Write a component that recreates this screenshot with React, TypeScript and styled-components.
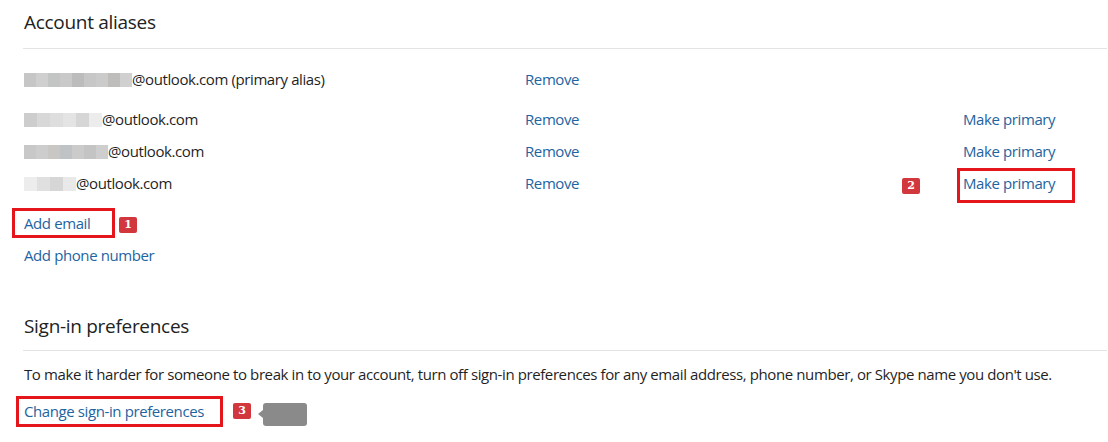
import styled, { createGlobalStyle } from "styled-components";

const GlobalStyle = createGlobalStyle`
  body {
    margin: 0;
    background: #ffffff;
    font-family: "Open Sans", "Noto Sans", sans-serif;
    color: #1f1f1f;
  }
`;

const Page = styled.div`
  padding: 8px 1px 0 23px;
`;

const Section = styled.section`
  display: flex;
  flex-direction: column;
`;

const Heading = styled.h2<{ $top?: number }>`
  margin: ${p => p.$top ?? 0}px 0 0 1px;
  font-size: 19px;
  letter-spacing: -0.3px;
  font-weight: 400;
  line-height: 28px;
  color: #222;
`;

const Rule = styled.hr<{ $top?: number }>`
  margin: ${p => p.$top ?? 12}px 0 0;
  border: 0;
  border-top: 1px solid #e3e3e3;
`;

const AliasList = styled.div`
  display: grid;
  grid-template-columns: 501px 438px 1fr;
  padding-left: 1px;
  margin-top: 14px;
`;

const Cell = styled.div<{ $gapAfter?: number }>`
  font-size: 15px;
  letter-spacing: -0.4px;
  line-height: 32px;
  white-space: nowrap;
  margin-bottom: ${p => p.$gapAfter ?? 0}px;
`;

const Link = styled.a`
  color: #1e64a0;
  text-decoration: none;
  font-size: 15px;
  letter-spacing: -0.4px;
  line-height: 32px;
  cursor: pointer;
  white-space: nowrap;
`;

const Redacted = styled.span`
  display: inline-flex;
  vertical-align: -2px;
  height: 14px;
`;

const Pixel = styled.span<{ $w: number; $c: string }>`
  width: ${p => p.$w}px;
  height: 100%;
  background: ${p => p.$c};
`;

const LinkStack = styled.div`
  display: flex;
  flex-direction: column;
  align-items: flex-start;
  padding-left: 1px;
  margin-top: 8px;
`;

const Highlight = styled.span`
  position: relative;
  display: inline-block;
`;

const Box = styled.span<{ $l: number; $t: number; $w: number; $h: number }>`
  position: absolute;
  left: ${p => p.$l}px;
  top: ${p => p.$t}px;
  width: ${p => p.$w}px;
  height: ${p => p.$h}px;
  border: 3px solid #e4161b;
  box-sizing: border-box;
  pointer-events: none;
`;

const Badge = styled.span<{ $l: number; $t: number }>`
  position: absolute;
  left: ${p => p.$l}px;
  top: ${p => p.$t}px;
  width: 18px;
  height: 16px;
  border-radius: 2px;
  background: #d1373d;
  color: #fff;
  font-family: "DejaVu Serif", "Liberation Serif", serif;
  font-weight: 700;
  font-size: 11px;
  letter-spacing: 0;
  line-height: 16px;
  text-align: center;
`;

const Callout = styled.span<{ $l: number; $t: number }>`
  position: absolute;
  left: ${p => p.$l}px;
  top: ${p => p.$t}px;
  width: 44px;
  height: 23px;
  border-radius: 3px;
  background: #8a8a8a;
  &::before {
    content: "";
    position: absolute;
    left: -5px;
    top: 7px;
    border-style: solid;
    border-width: 4.5px 5px 4.5px 0;
    border-color: transparent #8a8a8a transparent transparent;
  }
`;

const Paragraph = styled.p`
  margin: 10px 0 0 1px;
  font-size: 15px;
  letter-spacing: -0.4px;
  line-height: 26px;
  white-space: nowrap;
`;

const blur = (colors: string[], w: number) => (
  <Redacted>
    {colors.map((c, i) => (
      <Pixel key={i} $w={w} $c={c} />
    ))}
  </Redacted>
);

type Alias = {
  cells: string[];
  cellW: number;
  label: string;
  primary?: boolean;
};

const aliases: Alias[] = [
  {
    cells: ["#c6c6c6", "#cfcfcf", "#c3c4c4", "#c9c9c9", "#bcbcbc", "#c7c7c7", "#cbcbcb", "#bebdbb", "#d0d0d0"],
    cellW: 12,
    label: "@outlook.com (primary alias)",
    primary: true,
  },
  {
    cells: ["#cdcdcd", "#d8d8d8", "#dedede", "#e4e4e4", "#d6d6d6", "#ececec"],
    cellW: 13,
    label: "@outlook.com",
  },
  {
    cells: ["#c8c8c8", "#cdcdcd", "#c9c7c4", "#bfc3c6", "#cbcbcb", "#c4c4c4", "#cecece"],
    cellW: 12,
    label: "@outlook.com",
  },
  {
    cells: ["#ededed", "#e0e0e0", "#d6d6d6", "#e9e9e9"],
    cellW: 13,
    label: "@outlook.com",
  },
];

export default function App() {
  return (
    <Page>
      <GlobalStyle />
      <Section>
        <Heading>Account aliases</Heading>
        <Rule />
        <AliasList>
          {aliases.map((a, i) => {
            const gap = i === 0 ? 8 : 0;
            const last = i === aliases.length - 1;
            return [
              <Cell key={`n${i}`} $gapAfter={gap}>
                {blur(a.cells, a.cellW)}
                {a.label}
              </Cell>,
              <Cell key={`r${i}`} $gapAfter={gap}>
                <Link>Remove</Link>
              </Cell>,
              <Cell key={`p${i}`} $gapAfter={gap}>
                {a.primary ? null : last ? (
                  <Highlight>
                    <Link>Make primary</Link>
                    <Box $l={-6} $t={1} $w={118} $h={35} />
                    <Badge $l={-61} $t={11}>2</Badge>
                  </Highlight>
                ) : (
                  <Link>Make primary</Link>
                )}
              </Cell>,
            ];
          })}
        </AliasList>
        <LinkStack>
          <Highlight>
            <Link>Add email</Link>
            <Box $l={-12} $t={1} $w={103} $h={30} />
            <Badge $l={95} $t={10}>1</Badge>
          </Highlight>
          <Link>Add phone number</Link>
        </LinkStack>
      </Section>
      <Section>
        <Heading $top={41}>Sign-in preferences</Heading>
        <Rule $top={10} />
        <Paragraph>
          To make it harder for someone to break in to your account, turn off sign-in preferences for any email address, phone number, or Skype name you don't use.
        </Paragraph>
        <LinkStack>
          <Highlight>
            <Link>Change sign-in preferences</Link>
            <Box $l={-8} $t={1} $w={207} $h={31} />
            <Badge $l={209} $t={8}>3</Badge>
            <Callout $l={239} $t={8} />
          </Highlight>
        </LinkStack>
      </Section>
    </Page>
  );
}
